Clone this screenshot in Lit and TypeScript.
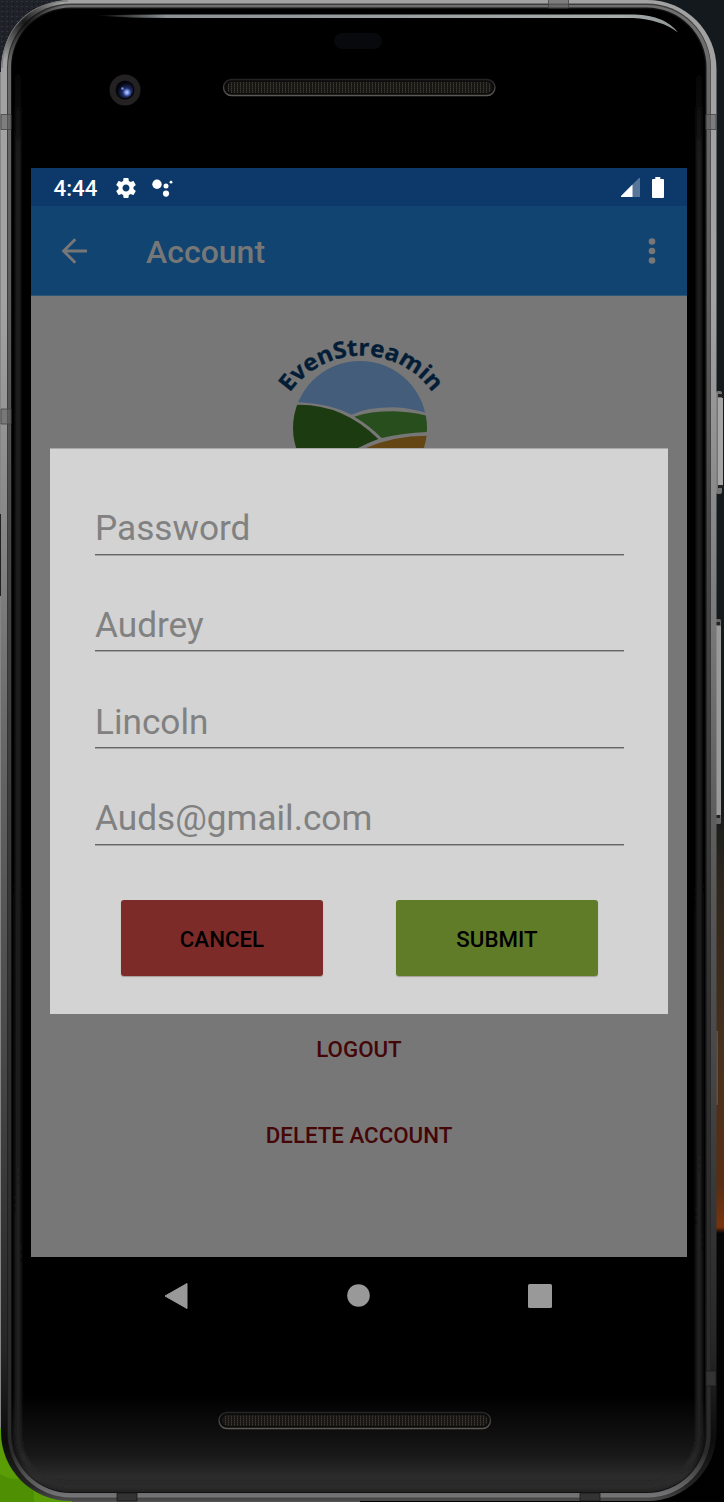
import { LitElement, html, css, svg } from "lit";
import { customElement, property } from "lit/decorators.js";

@customElement("phone-chassis")
export class PhoneChassis extends LitElement {
  static styles = css`
    :host { display: block; width: 724px; height: 1502px; }
    svg { display: block; }
  `;

  private grille(x: number, y: number) {
    return svg`
      <rect x=${x + 0.5} y=${y + 0.5} width="271.500" height="16" rx="8" fill="#0b0b0b" stroke="url(#lip)" stroke-width="1.4"/>
      <rect x=${x + 4} y=${y + 3} width="265" height="11" rx="5" fill="url(#mesh)"/>`;
  }

  render() {
    return html`<svg width="724" height="1502" viewBox="0 0 724 1502" aria-hidden="true">
      <defs>
        <linearGradient id="wall" x1="0" y1="0" x2="0" y2="1">
          <stop offset="0" stop-color="#14191d"/><stop offset=".53" stop-color="#14191b"/>
          <stop offset=".59" stop-color="#2e261c"/><stop offset=".7" stop-color="#47301c"/>
          <stop offset=".79" stop-color="#5a2d12"/><stop offset=".817" stop-color="#7a330c"/>
          <stop offset=".821" stop-color="#050606"/><stop offset="1" stop-color="#000"/>
        </linearGradient>
        <linearGradient id="metal" x1="0" y1="0" x2="0" y2="1">
          <stop offset="0" stop-color="#a2a2a2"/><stop offset=".2" stop-color="#a3a3a3"/>
          <stop offset=".36" stop-color="#858585"/><stop offset=".52" stop-color="#626262"/>
          <stop offset=".7" stop-color="#484848"/><stop offset=".9" stop-color="#262626"/>
          <stop offset=".96" stop-color="#0c0c0c"/><stop offset=".99" stop-color="#242424"/>
          <stop offset="1" stop-color="#4c4c4c"/>
        </linearGradient>
        <linearGradient id="groove" x1="0" y1="0" x2="0" y2="1">
          <stop offset="0" stop-color="#3c3c3c"/><stop offset=".3" stop-color="#3c3c3c"/>
          <stop offset="1" stop-color="#161616"/>
        </linearGradient>
        <linearGradient id="bevel" x1="0" y1="0" x2="0" y2="1">
          <stop offset="0" stop-color="#6f6f6f"/><stop offset=".2" stop-color="#5c5c5c"/>
          <stop offset=".36" stop-color="#484848"/>
          <stop offset=".7" stop-color="#303030"/><stop offset=".97" stop-color="#2a2a2a"/>
          <stop offset="1" stop-color="#767678"/>
        </linearGradient>
        <linearGradient id="glass" x1="0" y1="0" x2="0" y2="1">
          <stop offset="0" stop-color="#000"/><stop offset=".935" stop-color="#000"/>
          <stop offset=".975" stop-color="#181818"/><stop offset=".99" stop-color="#2c2c2c"/>
          <stop offset="1" stop-color="#222"/>
        </linearGradient>
        <linearGradient id="edge" x1="0" y1="0" x2="0" y2="1">
          <stop offset="0" stop-color="#1c1c1c" stop-opacity="0"/><stop offset=".03" stop-color="#1c1c1c" stop-opacity="0"/>
          <stop offset=".1" stop-color="#1e1e1e"/><stop offset=".96" stop-color="#202020"/>
          <stop offset="1" stop-color="#2b2b2b"/>
        </linearGradient>
        <filter id="soft" filterUnits="userSpaceOnUse" x="0" y="0" width="724" height="1502"><feGaussianBlur stdDeviation="1.5"/></filter>
        <linearGradient id="shine" x1="96" y1="0" x2="680" y2="0" gradientUnits="userSpaceOnUse">
          <stop offset="0" stop-color="#8d9194" stop-opacity="0"/><stop offset=".12" stop-color="#8d9194"/>
          <stop offset=".9" stop-color="#a6acac"/><stop offset="1" stop-color="#8f9494"/>
        </linearGradient>
        <linearGradient id="lip" x1="0" y1="0" x2="0" y2="1">
          <stop offset="0" stop-color="#242424"/><stop offset="1" stop-color="#5c5955"/>
        </linearGradient>
        <pattern id="mesh" width="3" height="2" patternUnits="userSpaceOnUse">
          <rect width="3" height="2" fill="#171612"/><rect width="1" height="1" fill="#3d3a33"/><rect y="1" width="1" height="1" fill="#2a2823"/>
        </pattern>
        <pattern id="grain" width="5" height="5" patternUnits="userSpaceOnUse">
          <rect width="5" height="5" fill="#20222a"/><rect x="1" y="1" width="2" height="1" fill="#30323a"/>
          <rect x="3" y="3" width="1" height="2" fill="#171920"/>
        </pattern>
        <radialGradient id="lens" cx=".62" cy=".65" r=".6">
          <stop offset="0" stop-color="#c6d6ff"/><stop offset=".22" stop-color="#6f8be0"/>
          <stop offset=".45" stop-color="#202c66"/><stop offset="1" stop-color="#04050c"/>
        </radialGradient>
        <radialGradient id="shade" gradientUnits="userSpaceOnUse" cx="24" cy="22" r="42">
          <stop offset="0" stop-color="#000" stop-opacity=".85"/><stop offset="1" stop-color="#000" stop-opacity="0"/>
        </radialGradient>
        <clipPath id="body"><rect x="1" y="0" width="715.500" height="1501" rx="69"/></clipPath>
      </defs>

      <rect width="724" height="1502" fill="#858585"/>
      <rect width="100" height="72" fill="url(#grain)"/>
      <rect x="360" width="364" height="1502" fill="url(#wall)"/>
      <rect y="514" width="2" height="82" fill="#222"/>
      <path d="M0 1428h20l80 60v14H0z" fill="#5a9d06"/>
      <path d="M0 1474q14 8 20 4l14 14v10H0z" fill="#4e8f03"/>
      <path d="M72 1500.500h288v1.500H72z" fill="#555"/>

      <rect x="716" y="391" width="6" height="103" rx="2" fill="#747474"/>
      <rect x="718" y="398" width="5" height="88" fill="#a5a5a5"/>
      <path d="M718 394h5v3h-5zM718 485h5v3h-5z" fill="#222"/>
      <rect x="715" y="619" width="6" height="205" rx="1.5" fill="#666"/>
      <rect x="716" y="626" width="5" height="189" fill="#999"/>
      <path d="M715 622h5v3h-5zM715 815h5v3h-5z" fill="#222"/>
      <path d="M717 1031v74" stroke="#77706b"/>

      <rect x="1" y="0" width="715.500" height="1501" rx="69" fill="url(#metal)"/>
      <rect x="7" y="3.500" width="704" height="1492" rx="64" fill="url(#groove)"/>
      <rect x="8" y="5" width="702.500" height="1492.500" rx="63" fill="url(#bevel)"/>
      <rect x="11" y="7.500" width="695.500" height="1485.500" rx="60" fill="#111"/>
      <path d="M0 0H90V90H0z" fill="url(#shade)" clip-path="url(#body)"/>
      <path d="M2 68C3 30 27 2 68 1" fill="none" stroke="#777" stroke-width="1"/>
      <rect x="12" y="9" width="693" height="1483" rx="58" fill="url(#glass)"/>
      <rect x="18" y="15" width="681" height="1471" rx="53" fill="none" stroke="url(#edge)" stroke-width="6" filter="url(#soft)"/>
      <path d="M96 15.500q25-1.300 90-1H635q30 1 43 18-17-13-45-14.500H186q-65 0-90-2.500z" fill="url(#shine)"/>

      <path d="M1 114.500h10v15H1zM706 114.500h10v15h-10zM1 409h10v15H1zM548.500 -1h20v9h-20z" fill="#666" fill-opacity=".6" stroke="#444" stroke-width=".8"/>
      <path d="M117 1493h20v8h-20zM580 1493h20v8h-20zM706 1371h10v15h-10z" fill="#333" stroke="#1a1a1a" stroke-width=".8"/>

      <rect x="334" y="33" width="48" height="16" rx="8" fill="#08090d"/>
      <circle cx="125" cy="90" r="15.500" fill="#232122"/>
      <circle cx="125" cy="90" r="9.500" fill="#05060b"/>
      <circle cx="125" cy="90" r="8" fill="url(#lens)"/>
      <circle cx="122.500" cy="88.500" r="1.300" fill="#6d8be0"/>
      ${this.grille(223, 79)}
      ${this.grille(218.5, 1412)}
    </svg>`;
  }
}

@customElement("farm-logo")
export class FarmLogo extends LitElement {
  static styles = css`
    :host { display: block; width: 200px; height: 130px; }
    svg { display: block; }
    .name { font: 700 69px "Open Sans", sans-serif; fill: #031d37; stroke: #031d37; stroke-width: 1px; }
  `;

  render() {
    return html`<svg width="200" height="130" viewBox="0 0 600 390" role="img">
      <defs>
        <clipPath id="disc"><circle cx="300" cy="312" r="201"/></clipPath>
        <path id="arc" d="M89 207A262 262 0 0 1 520 209"/>
      </defs>
      <text class="name"><textPath href="#arc" startOffset="0" textLength="502" lengthAdjust="spacingAndGlyphs">EvenStreamin</textPath></text>
      <g clip-path="url(#disc)">
        <path d="M90 235H118Q205 238 275 272Q320 250 400 250Q450 252 500 267V90H90z" fill="#445d7a"/>
        <path d="M90 242H112Q250 240 355 345Q325 356 294 372V390H90z" fill="#1d3b10"/>
        <path d="M283 278Q330 262 400 262Q450 263 505 276V324Q430 326 365 342Q330 306 283 278z" fill="#294e1d"/>
        <path d="M318 372Q400 335 505 335V390H290z" fill="#634613"/>
      </g>
    </svg>`;
  }
}

@customElement("edit-dialog")
export class EditDialog extends LitElement {
  @property({ attribute: false }) fields = ["Password", "Audrey", "Lincoln", "Auds@gmail.com"];

  static styles = css`
    :host {
      display: block; box-sizing: border-box; width: 618px; height: 566px;
      padding: 44px 44px 0 45px; background: #d3d3d3; border-top: 1px solid #a8a8a8;
    }
    .field {
      box-sizing: border-box; height: 96.750px; padding-top: 14px;
      font-size: 35.200px; line-height: 42px; color: #818181;
    }
    .value { border-bottom: 1px solid #656565; box-shadow: 0 1px 0 #a3a3a3; height: 46.600px; }
    .value span { display: block; }
    .actions { display: flex; gap: 73px; padding: 20px 26px 0; }
    button {
      width: 202px; height: 76px; border: 0; border-radius: 3px; padding: 2px 0 0;
      font: 500 22.300px/28px Roboto, sans-serif; color: #000;
      box-shadow: 0 1px 1px rgba(80, 60, 40, .35);
    }
    .cancel { background: #7d2b29; }
    .submit { background: #607c28; }
  `;

  render() {
    return html`
      ${this.fields.map((f) => html`<div class="field"><div class="value"><span>${f}</span></div></div>`)}
      <div class="actions">
        <button class="cancel">CANCEL</button>
        <button class="submit">SUBMIT</button>
      </div>`;
  }
}

@customElement("app-root")
export class AppRoot extends LitElement {
  static styles = css`
    :host { display: grid; width: 724px; height: 1502px; overflow: hidden; font-family: Roboto, sans-serif; }
    phone-chassis, .device { grid-area: 1 / 1; }
    .device { z-index: 1; padding: 168px 37px 0 31px; }
    .screen { position: relative; height: 1089px; background: #777; display: flex; flex-direction: column; }
    .status {
      height: 38px; flex: none; box-sizing: border-box; background: #0c3969; color: #fff; display: flex; align-items: center;
      padding: 2px 23px 0 22.500px; font-weight: 500; font-size: 22.300px;
    }
    .status svg, .bar svg { display: block; flex: none; }
    .gear { margin: -1px 0 0 17px; }
    .dots { margin: -1px 0 0 12.500px; }
    .signal { margin: -1px 12px 0 auto; }
    .battery { margin-top: -1px; }
    .bar {
      height: 89.500px; flex: none; box-sizing: border-box; background: #114471; border-bottom: 1px solid #2d5778;
      display: flex; align-items: center; color: #777; padding: 0 30px;
    }
    .bar svg { margin-top: 1px; }
    h1 { font-size: 32px; font-weight: 500; line-height: 40px; margin: 3px auto 0 58px; }
    .page { flex: 1; display: flex; flex-direction: column; align-items: center; }
    farm-logo { margin: 28.500px 0 0 2px; }
    .links { margin-top: 580.500px; display: grid; gap: 58px; justify-items: center; }
    .link { font-size: 22.300px; font-weight: 500; line-height: 28px; color: #440607; }
    edit-dialog { position: absolute; left: 19px; top: 280px; }
    .nav { height: 77px; display: flex; justify-content: space-between; align-items: center; padding: 0 135px 0 133px; }
  `;

  render() {
    return html`
      <phone-chassis></phone-chassis>
      <div class="device">
        <main class="screen">
          <div class="status">
            <span>4:44</span>
            <svg class="gear" width="24" height="24" viewBox="0 0 24 24" fill="#fff"><path d="M19.430 12.980c.04-.32.07-.64.07-.98s-.03-.66-.07-.98l2.110-1.650c.19-.15.24-.42.12-.64l-2-3.460c-.12-.22-.39-.3-.61-.22l-2.490 1c-.52-.4-1.080-.73-1.690-.98l-.38-2.650A.488.488 0 0 0 14 2h-4c-.25 0-.46.18-.49.42l-.38 2.650c-.61.25-1.170.59-1.690.98l-2.490-1c-.23-.09-.49 0-.61.22l-2 3.460c-.13.22-.07.49.12.64l2.110 1.650c-.04.32-.07.65-.07.98s.03.66.07.98l-2.110 1.650c-.19.15-.24.42-.12.64l2 3.460c.12.22.39.3.61.22l2.490-1c.52.4 1.080.73 1.690.98l.38 2.650c.03.24.24.42.49.42h4c.25 0 .46-.18.49-.42l.38-2.650c.61-.25 1.170-.59 1.690-.98l2.490 1c.23.09.49 0 .61-.22l2-3.460c.12-.22.07-.49-.12-.64l-2.110-1.650zM12 15.500c-1.930 0-3.500-1.570-3.500-3.500s1.570-3.500 3.500-3.500 3.500 1.570 3.500 3.500-1.570 3.500-3.500 3.500z"/></svg>
            <svg class="dots" width="24" height="24" viewBox="0 0 24 24" fill="#fff"><circle cx="6" cy="8.200" r="4.700"/><circle cx="15" cy="10" r="2.500"/><circle cx="20" cy="6.200" r="1.400"/><circle cx="15" cy="17.600" r="3.100"/></svg>
            <svg class="signal" width="19" height="20" viewBox="0 0 19 20"><path d="M0 18 18 0h1v19H0z" fill="#577598"/><path d="M0 18 11.500 6.500V19H0z" fill="#fff"/></svg>
            <svg class="battery" width="12" height="22" viewBox="0 0 12 22" fill="#fff"><path d="M3.300 0h5v2H11q1 0 1 1v17q0 1-1 1H1q-1 0-1-1V3q0-1 1-1h2.300z"/></svg>
          </div>
          <div class="bar">
            <svg width="27" height="26" viewBox="0 0 27 26" fill="none" stroke="#777" stroke-width="2.900"><path d="M14.300 1.300 2.600 13l11.700 11.700M2.500 13H26"/></svg>
            <h1>Account</h1>
            <svg width="10" height="28" viewBox="0 0 10 28" fill="#777"><circle cx="5" cy="4.500" r="3.300"/><circle cx="5" cy="14" r="3.300"/><circle cx="5" cy="23.500" r="3.300"/></svg>
          </div>
          <div class="page">
            <farm-logo></farm-logo>
            <div class="links"><div class="link">LOGOUT</div><div class="link">DELETE ACCOUNT</div></div>
          </div>
          <edit-dialog></edit-dialog>
        </main>
        <nav class="nav">
          <svg width="24" height="28" viewBox="0 0 24 28" fill="#999"><path d="M1 14 23 1.500v25z" stroke="#999" stroke-linejoin="round"/></svg>
          <svg width="24" height="24" viewBox="0 0 24 24" fill="#999"><circle cx="12.500" cy="11.500" r="11.300"/></svg>
          <svg width="24" height="24" viewBox="0 0 24 24" fill="#999"><rect width="24" height="24" rx="1.500"/></svg>
        </nav>
      </div>`;
  }
}
